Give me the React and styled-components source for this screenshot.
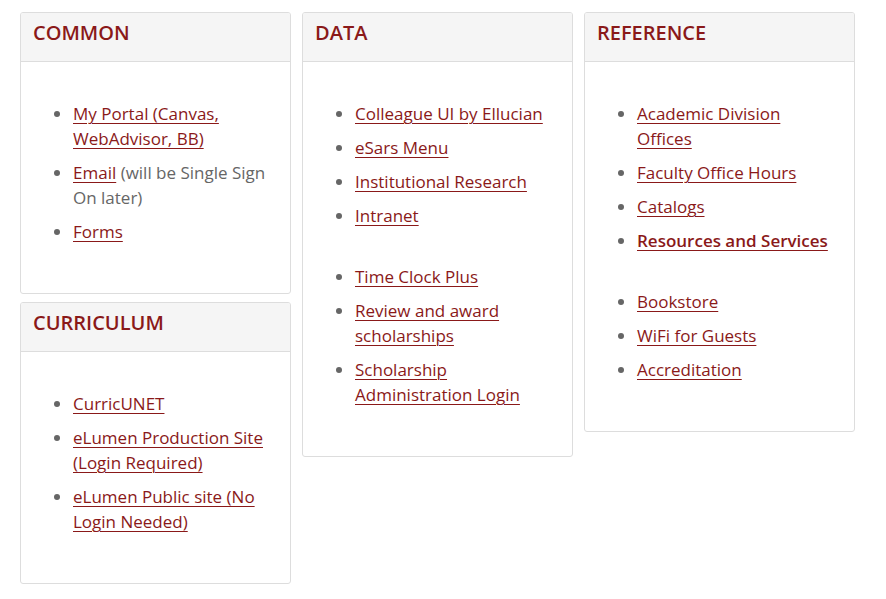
import React from "react";
import styled, { createGlobalStyle } from "styled-components";

const Global = createGlobalStyle`
  html, body { margin: 0; padding: 0; background: #fff; }
  body { font-family: "Open Sans", "Noto Sans", sans-serif; }
`;

const Page = styled.div`
  display: grid;
  grid-template-columns: repeat(3, 271px);
  column-gap: 11px;
  align-items: start;
  padding: 12px 20px;
`;

const Column = styled.div`
  display: flex;
  flex-direction: column;
  gap: 8px;
`;

const Panel = styled.section`
  border: 1px solid #dddddd;
  border-radius: 3px;
  background: #fff;
  overflow: hidden;
`;

const Header = styled.h3`
  margin: 0;
  background: #f5f5f5;
  border-bottom: 1px solid #dddddd;
  padding: 6px 12px 14px;
  font-size: 20px;
  line-height: 28px;
  font-weight: 600;
  color: #8a1919;
`;

const Body = styled.div`
  padding: 39px 12px 49px;
  display: flex;
  flex-direction: column;
  gap: 36px;
`;

const List = styled.ul`
  margin: 0;
  padding: 0 6px 0 40px;
  font-size: 17px;
  line-height: 25px;
  color: #666;
  li::marker { color: #666; }
`;

const Item = styled.li`
  & + & { margin-top: 9px; }
`;

const Link = styled.a`
  color: #8a1919;
  text-decoration: underline;
  text-underline-offset: 3px;
  text-decoration-thickness: 1px;
  font-weight: ${(p) => (p.$bold ? 600 : 400)};
`;

const Card = ({ title, lists }) => (
  <Panel>
    <Header>{title}</Header>
    <Body>
      {lists.map((items, i) => (
        <List key={i}>
          {items.map((it, j) => (
            <Item key={j}>
              <Link href="#" $bold={it.bold}>{it.t}</Link>
              {it.rest ? " " + it.rest : null}
            </Item>
          ))}
        </List>
      ))}
    </Body>
  </Panel>
);

export default function App() {
  return (
    <>
      <Global />
      <Page>
        <Column>
          <Card
            title="COMMON"
            lists={[[
              { t: "My Portal (Canvas, WebAdvisor, BB)" },
              { t: "Email", rest: "(will be Single Sign On later)" },
              { t: "Forms" },
            ]]}
          />
          <Card
            title="CURRICULUM"
            lists={[[
              { t: "CurricUNET" },
              { t: "eLumen Production Site (Login Required)" },
              { t: "eLumen Public site (No Login Needed)" },
            ]]}
          />
        </Column>
        <Column>
          <Card
            title="DATA"
            lists={[
              [
                { t: "Colleague UI by Ellucian" },
                { t: "eSars Menu" },
                { t: "Institutional Research" },
                { t: "Intranet" },
              ],
              [
                { t: "Time Clock Plus" },
                { t: "Review and award scholarships" },
                { t: "Scholarship Administration Login" },
              ],
            ]}
          />
        </Column>
        <Column>
          <Card
            title="REFERENCE"
            lists={[
              [
                { t: "Academic Division Offices" },
                { t: "Faculty Office Hours" },
                { t: "Catalogs" },
                { t: "Resources and Services", bold: true },
              ],
              [
                { t: "Bookstore" },
                { t: "WiFi for Guests" },
                { t: "Accreditation" },
              ],
            ]}
          />
        </Column>
      </Page>
    </>
  );
}
